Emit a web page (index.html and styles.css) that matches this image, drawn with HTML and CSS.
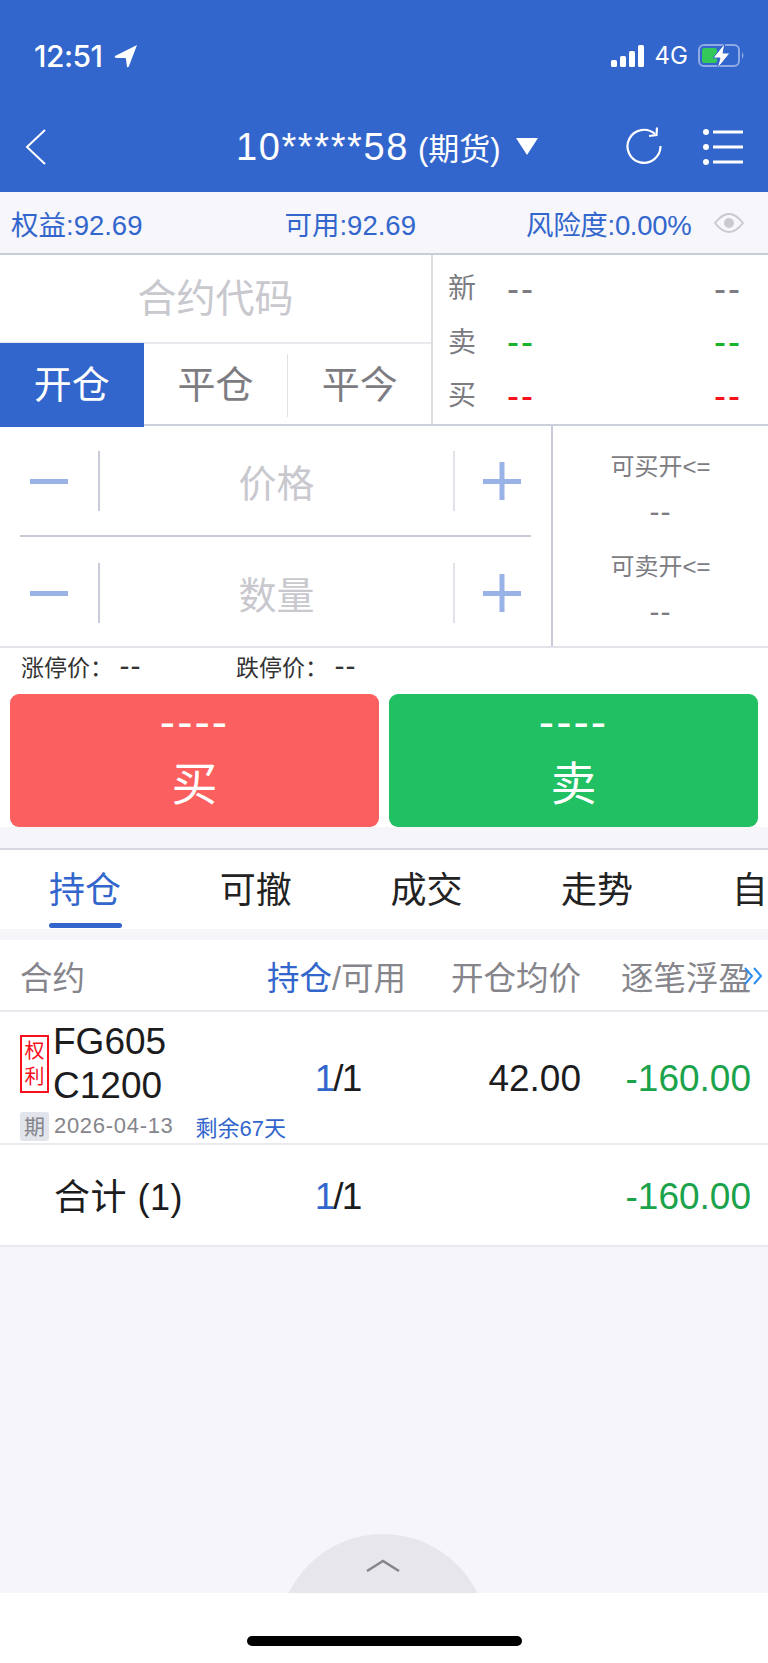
FILE: index.html
```html
<!DOCTYPE html>
<html lang="zh-CN">
<head>
  <meta charset="UTF-8">
  <title>持仓</title>
  <link rel="stylesheet" href="styles.css">
</head>
<body>
  <div class="page">
    <header class="top">
      <div class="status">
        <div class="status-left">
          <span class="clock">12:51</span>
          <svg class="loc" width="24" height="24" viewBox="0 0 24 24"><path d="M23 1 L1 12 Q0 13 2 14 L11 14 Q12 14 12 15 L13 23 Q14 24 15 22 Z" fill="#fff"/></svg>
        </div>
        <div class="status-right">
          <svg width="34" height="22" viewBox="0 0 34 22"><rect x="0" y="15" width="6" height="7" rx="1.5" fill="#fff"/><rect x="9" y="11" width="6" height="11" rx="1.5" fill="#fff"/><rect x="18" y="6" width="6" height="16" rx="1.5" fill="#fff"/><rect x="27" y="0" width="6" height="22" rx="1.5" fill="#fff"/></svg>
          <span class="net">4G</span>
          <svg width="48" height="26" viewBox="0 0 48 26"><rect x="1" y="2" width="40" height="21" rx="5" fill="none" stroke="#8fa9e2" stroke-width="2"/><rect x="4" y="5" width="15" height="15" rx="2" fill="#34c759"/><path d="M44 9 Q47 12.500 44 16 Z" fill="#8fa9e2"/><path d="M27 0 L15 15 L22 15 L19 26 L32 10 L25 10 Z" fill="#fff" stroke="#3366cc" stroke-width="1"/></svg>
        </div>
      </div>
      <nav class="navbar">
        <svg class="back" width="22" height="36" viewBox="0 0 22 36"><path d="M20 1 L2 18 L20 35" fill="none" stroke="#fff" stroke-width="2"/></svg>
        <div class="title">10*****58 <span class="title-sub">(期货)</span><i class="caret"></i></div>
        <svg class="reload" width="38" height="38" viewBox="0 0 38 38"><path d="M30 7 A16.500 16.500 0 1 0 35.500 19" fill="none" stroke="#fff" stroke-width="2.200"/><path d="M24 9 L31.500 8 L32 0.500" fill="none" stroke="#fff" stroke-width="2.200"/></svg>
        <svg class="menu" width="40" height="36" viewBox="0 0 40 36"><g fill="#fff"><circle cx="3" cy="3" r="3"/><circle cx="3" cy="18" r="3"/><circle cx="3" cy="33" r="3"/><rect x="10" y="1.500" width="30" height="3"/><rect x="10" y="16.500" width="30" height="3"/><rect x="10" y="31.500" width="30" height="3"/></g></svg>
      </nav>
    </header>

    <div class="account">
      <span>权益:92.69</span>
      <span class="account-mid">可用:92.69</span>
      <span class="account-risk">风险度:0.00%</span>
      <svg class="eye" width="30" height="22" viewBox="0 0 30 22"><path d="M1 11 Q15 -7 29 11 Q15 29 1 11 Z" fill="none" stroke="#c9c9d2" stroke-width="2"/><circle cx="15" cy="11" r="5" fill="#c9c9d2"/></svg>
    </div>

    <section class="quote-panel">
      <div class="contract">
        <div class="contract-code">合约代码</div>
        <div class="mode-tabs">
          <div class="mode active">开仓</div>
          <div class="mode">平仓</div>
          <div class="mode mode-sep">平今</div>
        </div>
      </div>
      <div class="quotes">
        <div class="quote"><span class="quote-label">新</span><span class="dash">--</span><span class="dash">--</span></div>
        <div class="quote"><span class="quote-label">卖</span><span class="dash green">--</span><span class="dash green">--</span></div>
        <div class="quote"><span class="quote-label">买</span><span class="dash red">--</span><span class="dash red">--</span></div>
      </div>
    </section>

    <section class="order-panel">
      <div class="steppers">
        <div class="stepper">
          <div class="step-btn"><svg width="38" height="38" viewBox="0 0 38 38"><rect x="0" y="17" width="38" height="5" fill="#9ab3e6"/></svg></div>
          <div class="step-field">价格</div>
          <div class="step-btn"><svg width="38" height="38" viewBox="0 0 38 38"><rect x="0" y="17" width="38" height="5" fill="#9ab3e6"/><rect x="16.500" y="0" width="5" height="38" fill="#9ab3e6"/></svg></div>
        </div>
        <div class="stepper stepper-last">
          <div class="step-btn"><svg width="38" height="38" viewBox="0 0 38 38"><rect x="0" y="17" width="38" height="5" fill="#9ab3e6"/></svg></div>
          <div class="step-field">数量</div>
          <div class="step-btn"><svg width="38" height="38" viewBox="0 0 38 38"><rect x="0" y="17" width="38" height="5" fill="#9ab3e6"/><rect x="16.500" y="0" width="5" height="38" fill="#9ab3e6"/></svg></div>
        </div>
      </div>
      <div class="limits">
        <div class="limit"><span>可买开&lt;=</span><span class="small-dash">--</span></div>
        <div class="limit"><span>可卖开&lt;=</span><span class="small-dash">--</span></div>
      </div>
    </section>

    <div class="stop-prices">
      <span class="stop-up">涨停价： <span class="small-dash">--</span></span>
      <span>跌停价： <span class="small-dash">--</span></span>
    </div>

    <div class="trade-btns">
      <button class="trade buy"><span class="trade-price">----</span><span class="trade-name">买</span></button>
      <button class="trade sell"><span class="trade-price">----</span><span class="trade-name">卖</span></button>
    </div>

    <div class="tabs">
      <div class="tab active">持仓</div>
      <div class="tab">可撤</div>
      <div class="tab">成交</div>
      <div class="tab">走势</div>
      <div class="tab">自</div>
    </div>

    <div class="table">
      <div class="row head">
        <div>合约</div>
        <div class="cell-mid"><span class="blue">持仓</span>/可用</div>
        <div class="cell-right">开仓均价</div>
        <div class="cell-right">逐笔浮盈</div>
        <svg class="more" width="19" height="18" viewBox="0 0 19 18"><path d="M1 1 L8 9 L1 17 M10 1 L17 9 L10 17" fill="none" stroke="#2b8cf0" stroke-width="2"/></svg>
      </div>
      <div class="row item">
        <div class="instrument">
          <div class="instrument-top">
            <span class="right-tag">权利</span>
            <div class="instrument-name">FG605<br>C1200</div>
          </div>
          <div class="instrument-meta">
            <span class="term-tag">期</span>
            <span class="expiry">2026-04-13</span>
            <span class="days">剩余67天</span>
          </div>
        </div>
        <div class="cell-mid count"><span class="blue">1</span>/1</div>
        <div class="cell-right value">42.00</div>
        <div class="cell-right value loss">-160.00</div>
      </div>
      <div class="row total">
        <div class="total-label">合计 (1)</div>
        <div class="cell-mid count"><span class="blue">1</span>/1</div>
        <div></div>
        <div class="cell-right value loss">-160.00</div>
      </div>
    </div>

    <div class="filler">
      <div class="pull-up">
        <svg width="34" height="13" viewBox="0 0 34 13"><path d="M1 12 L17 2 L33 12" fill="none" stroke="#85858b" stroke-width="2.500"/></svg>
      </div>
    </div>

    <div class="home-area"><div class="home-bar"></div></div>
  </div>
</body>
</html>
```

FILE: styles.css
```css
* {
  box-sizing: border-box;
}

body {
  margin: 0;
  background: #fff;
  font-family: "Liberation Sans", "Noto Sans CJK SC", sans-serif;
}

.page {
  width: 768px;
  height: 1663px;
  display: flex;
  flex-direction: column;
  overflow: hidden;
  background: #fff;
}

/* header */
.top {
  height: 192px;
  flex: none;
  background: #3366cc;
  color: #fff;
}

.status {
  height: 108px;
  padding: 38px 22px 0 34px;
  font-family: Inter, sans-serif;
  display: flex;
  justify-content: space-between;
  align-items: flex-start;
}

.status-left {
  display: flex;
  align-items: center;
  gap: 11px;
}

.clock {
  font-size: 30px;
  font-weight: 500;
  line-height: 36px;
  letter-spacing: -0.5px;
}

.status-right {
  display: flex;
  align-items: center;
  gap: 10px;
  padding-top: 5px;
}

.net {
  font-size: 24px;
  line-height: 26px;
}

.navbar {
  height: 84px;
  padding: 0 25px;
  display: flex;
  align-items: flex-start;
}

.back {
  margin-top: 21px;
}

.title {
  margin-left: 189px;
  font-size: 38px;
  line-height: 78px;
  letter-spacing: 1.600px;
  word-spacing: -3px;
  white-space: nowrap;
}

.title-sub {
  font-size: 31px;
  letter-spacing: 0;
}

.caret {
  display: inline-block;
  margin-left: 15px;
  vertical-align: 5px;
  border-left: 11px solid transparent;
  border-right: 11px solid transparent;
  border-top: 17px solid #fff;
}

.reload {
  margin-left: auto;
  margin-top: 19px;
}

.menu {
  margin-left: 40px;
  margin-top: 21px;
}

/* account bar */
.account {
  height: 63px;
  flex: none;
  padding: 0 24px 0 11px;
  display: flex;
  align-items: center;
  background: #f6f6fb;
  border-bottom: 2px solid #c8ccd8;
  color: #3366cc;
  font-size: 27.500px;
}

.account-mid {
  margin-left: 142px;
}

.account-risk {
  margin-left: 110px;
  letter-spacing: -0.300px;
}

.eye {
  margin-left: auto;
}

/* contract + quotes */
.quote-panel {
  height: 171px;
  flex: none;
  display: flex;
  border-bottom: 2px solid #ccd0da;
}

.contract {
  width: 431px;
  display: flex;
  flex-direction: column;
}

.contract-code {
  height: 89px;
  border-bottom: 2px solid #eaeaee;
  text-align: center;
  font-size: 39px;
  line-height: 88px;
  color: #c8c8ce;
}

.mode-tabs {
  flex: 1;
  display: flex;
  align-items: stretch;
}

.mode {
  width: 144px;
  margin-top: 10px;
  margin-bottom: 10px;
  text-align: center;
  font-size: 38px;
  line-height: 62px;
  color: #7c7c82;
}

.mode.active {
  margin: -1px 0 0;
  background: #3366cc;
  color: #fff;
  line-height: 84px;
}

.mode-sep {
  border-left: 1px solid #e2e2e6;
}

.quotes {
  flex: 1;
  padding: 7px 26px 0 15px;
  border-left: 2px solid #dcdde3;
}

.quote {
  height: 53.500px;
  display: grid;
  grid-template-columns: 59px 1fr auto;
  align-items: center;
  font-size: 28px;
  color: #7c7c82;
}

.quote-label {
  line-height: 53px;
}

.dash {
  font-size: 36px;
  line-height: 40px;
  letter-spacing: 2px;
}

.small-dash {
  font-size: 30px;
  line-height: 24px;
  letter-spacing: 1px;
}

.green {
  color: #17b32b;
}

.red {
  color: #f8101c;
}

/* price / quantity */
.order-panel {
  height: 222px;
  flex: none;
  display: flex;
  border-bottom: 2px solid #e2e3e8;
}

.steppers {
  width: 553px;
  padding: 0 20px 0 20px;
  border-right: 2px solid #c8ccd8;
}

.stepper {
  height: 111px;
  display: grid;
  grid-template-columns: 80px 1fr 78px;
  align-items: center;
  border-bottom: 2px solid #c8ccd8;
}

.stepper-last {
  border-bottom: none;
}

.step-btn {
  height: 60px;
  display: flex;
  align-items: center;
  justify-content: center;
}

.step-btn:first-child {
  justify-content: flex-start;
  padding-left: 10px;
  border-right: 2px solid #c8ccd8;
}

.step-btn:last-child {
  justify-content: flex-end;
  padding-right: 10px;
  border-left: 2px solid #e2e3e8;
}

.step-field {
  text-align: center;
  font-size: 38px;
  color: #c8c8ce;
}

.limits {
  flex: 1;
  padding-top: 24px;
}

.limit {
  height: 100px;
  display: flex;
  flex-direction: column;
  align-items: center;
  gap: 16px;
  font-size: 24px;
  line-height: 34px;
  color: #7c7c82;
}

/* stop prices */
.stop-prices {
  height: 46px;
  flex: none;
  padding: 0 0 10px 21px;
  display: flex;
  align-items: center;
  font-size: 23px;
  color: #333;
}

.stop-up {
  width: 215px;
}

/* buy / sell */
.trade-btns {
  height: 133px;
  flex: none;
  padding: 0 10px;
  display: flex;
  gap: 10px;
}

.trade {
  flex: 1;
  border: none;
  padding: 0;
  border-radius: 9px;
  display: flex;
  flex-direction: column;
  align-items: center;
  color: #fff;
  font-family: inherit;
}

.buy {
  background: #fc5f5f;
}

.sell {
  background: #20c063;
}

.trade-price {
  margin-top: 7px;
  font-size: 46px;
  letter-spacing: 2px;
  line-height: 42px;
}

.trade-name {
  margin-top: 11px;
  font-size: 46px;
  line-height: 60px;
}

/* tabs */
.tabs {
  height: 113px;
  flex: none;
  padding-left: 49px;
  display: flex;
  gap: 98.700px;
  overflow: hidden;
  background: #fff;
  border-top: 21px solid #f5f5fa;
  border-bottom: 11px solid #f5f5fa;
  box-shadow: inset 0 2px 0 #d8d9e0;
}

.tab {
  flex: none;
  width: 72px;
  padding-top: 18px;
  font-size: 36px;
  line-height: 50px;
  color: #222;
  white-space: nowrap;
  position: relative;
}

.tab.active {
  color: #3366cc;
}

.tab.active::after {
  content: "";
  position: absolute;
  left: 0;
  top: 75px;
  width: 73px;
  height: 5px;
  border-radius: 3px;
  background: #3366cc;
}

/* table */
.table {
  flex: none;
}

.row {
  position: relative;
  display: grid;
  grid-template-columns: 265px 143px 173px 170px;
  align-items: center;
  border-bottom: 2px solid #e8eaef;
}

.cell-mid {
  text-align: center;
}

.cell-right {
  text-align: right;
  white-space: nowrap;
}

.count {
  padding: 3px 0 0 2px;
  letter-spacing: -2px;
}

.value {
  padding-top: 3px;
}

.blue {
  color: #3366cc;
}

.head {
  height: 72px;
  padding-left: 20px;
  grid-template-columns: 245px 143px 173px 170px;
  font-size: 32.500px;
  color: #85858b;
}

.more {
  position: absolute;
  right: 5px;
  top: 27px;
}

.item {
  height: 133px;
  font-size: 37px;
  color: #1c1c1e;
}

.instrument {
  align-self: stretch;
  padding: 8px 0 0 20px;
}

.instrument-top {
  display: flex;
  align-items: center;
  gap: 4px;
}

.right-tag {
  flex: none;
  width: 29px;
  height: 58px;
  border: 2px solid #f8101c;
  color: #f8101c;
  font-size: 20px;
  line-height: 26px;
  text-align: center;
  padding-top: 1px;
}

.instrument-name {
  font-size: 37px;
  line-height: 44px;
  white-space: nowrap;
}

.instrument-meta {
  margin-top: 2px;
  display: flex;
  align-items: center;
  white-space: nowrap;
  font-size: 22px;
}

.term-tag {
  flex: none;
  width: 29px;
  height: 29px;
  border-radius: 3px;
  background: #e2e4ec;
  color: #85858b;
  text-align: center;
  line-height: 29px;
  font-size: 21px;
}

.expiry {
  margin-left: 5px;
  color: #85858b;
  letter-spacing: 0.700px;
}

.days {
  margin-left: 22px;
  color: #3366cc;
}

.loss {
  color: #1aa34a;
}

.total {
  height: 102px;
  font-size: 37px;
  color: #1c1c1e;
}

.total-label {
  padding: 0 0 3px 54px;
  font-size: 36px;
  letter-spacing: 0.500px;
}

/* bottom */
.filler {
  flex: 1;
  position: relative;
  overflow: hidden;
  background: #f5f5fa;
}

.pull-up {
  position: absolute;
  left: 278px;
  bottom: -151px;
  width: 210px;
  height: 210px;
  border-radius: 50%;
  background: #e6e6eb;
  display: flex;
  justify-content: center;
  padding-top: 25px;
}

.home-area {
  height: 70px;
  flex: none;
  padding-top: 43px;
  background: #fff;
}

.home-bar {
  width: 275px;
  height: 10px;
  margin-left: 247px;
  border-radius: 5px;
  background: #000;
}
```
